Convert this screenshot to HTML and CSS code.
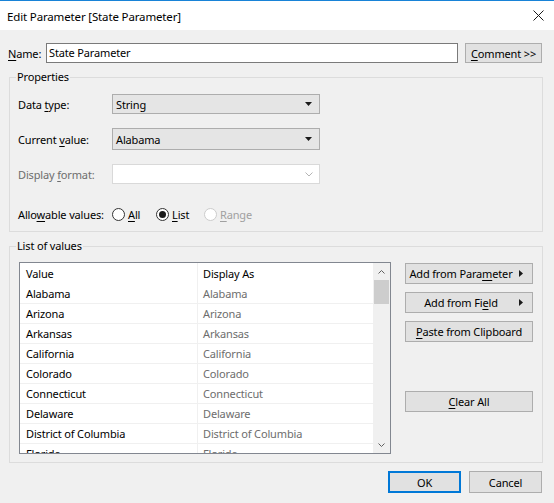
FILE: index.html
```html
<!DOCTYPE html>
<html lang="en">
    <head>
        <meta charset="utf-8" />
        <title>Edit Parameter</title>
        <link rel="stylesheet" href="styles.css">
    </head>
    <body>
        <div class="window">
            <div class="titlebar">
                <span class="title">Edit Parameter [State Parameter]</span>
                <svg class="close" width="11" height="11" viewBox="0 0 11 11">
                    <path d="M0.5 0.5L10.5 10.5M10.5 0.5L0.5 10.5" stroke="#1a1a1a" stroke-width="1" fill="none"/>
                </svg>
            </div>
            <div class="content">
                <div class="nameRow">
                    <span class="nameLabel"><u>N</u>ame:</span>
                    <div class="textInput">State Parameter</div>
                    <div class="button commentBtn"><u>C</u>omment &gt;&gt;</div>
                </div>

                <fieldset class="group props">
                    <legend>Properties</legend>
                    <div class="propRow dataType">
                        <span class="propLabel">Data <u>t</u>ype:</span>
                        <div class="select">
                            <span>String</span>
                            <svg width="7" height="4" viewBox="0 0 7 4"><path d="M0 0H7L3.5 4Z" fill="#1a1a1a"/></svg>
                        </div>
                    </div>
                    <div class="propRow currentValue">
                        <span class="propLabel">Current <u>v</u>alue:</span>
                        <div class="select tall">
                            <span>Alabama</span>
                            <svg width="7" height="4" viewBox="0 0 7 4"><path d="M0 0H7L3.5 4Z" fill="#1a1a1a"/></svg>
                        </div>
                    </div>
                    <div class="propRow displayFormat">
                        <span class="propLabel disabled">Display <u>f</u>ormat:</span>
                        <div class="select disabledSelect">
                            <span></span>
                            <svg width="8" height="5" viewBox="0 0 8 5"><path d="M0.5 0.5L4 4L7.5 0.5" stroke="#b4b4b4" fill="none"/></svg>
                        </div>
                    </div>
                    <div class="propRow allowable">
                        <span class="propLabel">Allo<u>w</u>able values:</span>
                        <div class="option optAll">
                            <span class="radio"></span>
                            <span><u>A</u>ll</span>
                        </div>
                        <div class="option optList">
                            <span class="radio checked"></span>
                            <span><u>L</u>ist</span>
                        </div>
                        <div class="option optRange">
                            <span class="radio"></span>
                            <span><u>R</u>ange</span>
                        </div>
                    </div>
                </fieldset>

                <fieldset class="group values">
                    <legend>List of values</legend>
                    <div class="valuesRow">
                        <div class="list">
                            <div class="listBody">
                                <div class="listRow header">
                                    <span class="cell valueCell">Value</span>
                                    <span class="cell displayCell header">Display As</span>
                                </div>
                                <div class="listRow"><span class="cell valueCell">Alabama</span><span class="cell displayCell">Alabama</span></div>
                                <div class="listRow"><span class="cell valueCell">Arizona</span><span class="cell displayCell">Arizona</span></div>
                                <div class="listRow"><span class="cell valueCell">Arkansas</span><span class="cell displayCell">Arkansas</span></div>
                                <div class="listRow"><span class="cell valueCell">California</span><span class="cell displayCell">California</span></div>
                                <div class="listRow"><span class="cell valueCell">Colorado</span><span class="cell displayCell">Colorado</span></div>
                                <div class="listRow"><span class="cell valueCell">Connecticut</span><span class="cell displayCell">Connecticut</span></div>
                                <div class="listRow"><span class="cell valueCell">Delaware</span><span class="cell displayCell">Delaware</span></div>
                                <div class="listRow"><span class="cell valueCell">District of Columbia</span><span class="cell displayCell">District of Columbia</span></div>
                                <div class="listRow"><span class="cell valueCell">Florida</span><span class="cell displayCell">Florida</span></div>
                            </div>
                            <div class="scrollbar">
                                <div class="scrollBtn">
                                    <svg width="7" height="4" viewBox="0 0 7 4"><path d="M0.5 3.5L3.5 0.5L6.5 3.5" stroke="#606060" fill="none"/></svg>
                                </div>
                                <div class="track"><div class="thumb"></div></div>
                                <div class="scrollBtn">
                                    <svg width="7" height="4" viewBox="0 0 7 4"><path d="M0.5 0.5L3.5 3.5L6.5 0.5" stroke="#606060" fill="none"/></svg>
                                </div>
                            </div>
                        </div>
                        <div class="sideButtons">
                            <div class="button sideBtn">
                                <span class="btnText">Add from Para<u>m</u>eter</span>
                                <svg class="btnArrow" width="4" height="7" viewBox="0 0 4 7"><path d="M0 0V7L4 3.5Z" fill="#1a1a1a"/></svg>
                            </div>
                            <div class="button sideBtn">
                                <span class="btnText">Add from Fi<u>e</u>ld</span>
                                <svg class="btnArrow" width="4" height="7" viewBox="0 0 4 7"><path d="M0 0V7L4 3.5Z" fill="#1a1a1a"/></svg>
                            </div>
                            <div class="button sideBtn"><u>P</u>aste from Clipboard</div>
                            <div class="button sideBtn clearBtn"><u>C</u>lear All</div>
                        </div>
                    </div>
                </fieldset>

                <div class="footer">
                    <div class="button dialogBtn default">OK</div>
                    <div class="button dialogBtn">Cancel</div>
                </div>
            </div>
        </div>
    </body>
</html>
```

FILE: styles.css
```css
html, body {
    margin: 0;
    padding: 0;
    background-color: #f0f0f0;
}

body {
    font-family: "Noto Sans", "Open Sans", sans-serif;
    font-size: 11px;
    letter-spacing: -0.15px;
    color: #000;
    white-space: nowrap;
}

u {
    text-underline-offset: 2px;
}

.window {
    width: 554px;
    height: 503px;
    box-sizing: border-box;
    border-top: 1px solid #1883d7;
    background-color: #f0f0f0;
    overflow: hidden;
}

.titlebar {
    height: 29px;
    box-sizing: border-box;
    padding: 2px 10px 0 7px;
    background-color: #fff;
    display: flex;
    align-items: center;
    justify-content: space-between;
}

.title {
    font-size: 11.5px;
}

.close {
    margin-top: -3px;
}

.content {
    padding: 13px 11px 0 8px;
}

.nameRow {
    display: flex;
    align-items: center;
    height: 20px;
}

.nameLabel {
    width: 38px;
}

.textInput {
    width: 412px;
    height: 20px;
    box-sizing: border-box;
    border: 1px solid #7a7a7a;
    background-color: #fff;
    padding-left: 2px;
    line-height: 18px;
}

.button {
    box-sizing: border-box;
    background-color: #e1e1e1;
    border: 1px solid #adadad;
    display: flex;
    align-items: center;
    justify-content: center;
}

.commentBtn {
    width: 77px;
    height: 20px;
    margin-left: 7px;
}

.group {
    margin: 0 0 0 1px;
    padding: 0;
    border: 1px solid #dcdcdc;
    min-width: 0;
}

.group legend {
    padding: 0 1px;
    margin-left: 6px;
    line-height: 16px;
}

.props {
    margin-top: 6px;
    padding-bottom: 7px;
}

.propRow {
    display: flex;
    align-items: center;
    height: 20px;
    padding-left: 8px;
    margin-top: 14px;
}

.propRow.dataType {
    margin-top: 9px;
}

.propRow.currentValue {
    height: 22px;
}

.propRow.allowable {
    margin-top: 20px;
}

.propLabel {
    width: 94px;
}

.disabled {
    color: #6d6d6d;
}

.select {
    width: 208px;
    height: 20px;
    box-sizing: border-box;
    border: 1px solid #adadad;
    background-color: #e5e5e5;
    padding: 0 7px 0 3px;
    display: flex;
    align-items: center;
    justify-content: space-between;
}

.select.tall {
    height: 22px;
}

.disabledSelect {
    background-color: #fff;
    border-color: #d9d9d9;
    padding-right: 6px;
}

.option {
    display: flex;
    align-items: center;
    gap: 3px;
}

.optAll {
    width: 44px;
}

.optList {
    width: 48px;
}

.optRange {
    color: #a0a0a0;
}

.radio {
    width: 13px;
    height: 13px;
    box-sizing: border-box;
    border-radius: 50%;
    border: 1px solid #333;
    background-color: #fff;
    display: flex;
    align-items: center;
    justify-content: center;
}

.radio.checked::after {
    content: "";
    width: 7px;
    height: 7px;
    border-radius: 50%;
    background-color: #1a1a1a;
}

.optRange .radio {
    border-color: #cccccc;
}

.values {
    margin-top: 6px;
    padding-bottom: 8px;
}

.valuesRow {
    display: flex;
    align-items: flex-start;
    margin-top: 8px;
    padding-left: 9px;
}

.list {
    width: 372px;
    height: 192px;
    box-sizing: border-box;
    border: 1px solid #828790;
    background-color: #fff;
    display: flex;
}

.listBody {
    flex: 1;
    overflow: hidden;
}

.listRow {
    display: flex;
    height: 19px;
    border-bottom: 1px solid #f0f0f0;
    line-height: 19px;
}

.listRow.header {
    height: 21px;
    line-height: 21px;
    border-bottom: 0;
}

.valueCell {
    width: 171px;
    padding-left: 6px;
    border-right: 1px solid #f0f0f0;
}

.displayCell {
    padding-left: 5px;
    color: #6d6d6d;
}

.displayCell.header {
    color: #000;
}

.scrollbar {
    width: 17px;
    background-color: #f0f0f0;
    display: flex;
    flex-direction: column;
}

.scrollBtn {
    height: 17px;
    display: flex;
    align-items: center;
    justify-content: center;
}

.track {
    flex: 1;
}

.thumb {
    height: 24px;
    margin: 0 1px;
    background-color: #cdcdcd;
}

.sideButtons {
    display: flex;
    flex-direction: column;
    gap: 8px;
    margin-left: 14px;
    margin-top: 1px;
}

.sideBtn {
    width: 128px;
    height: 21px;
}

.btnText {
    flex: 1;
    text-align: center;
}

.btnArrow {
    margin: 0 9px 0 3px;
}

.clearBtn {
    margin-top: 41px;
}

.footer {
    display: flex;
    justify-content: flex-end;
    gap: 8px;
    margin-top: 8px;
    margin-right: 1px;
}

.dialogBtn {
    width: 73px;
    height: 22px;
}

.dialogBtn.default {
    border-color: #0078d7;
    box-shadow: inset 0 0 0 1px #0078d7;
}
```
